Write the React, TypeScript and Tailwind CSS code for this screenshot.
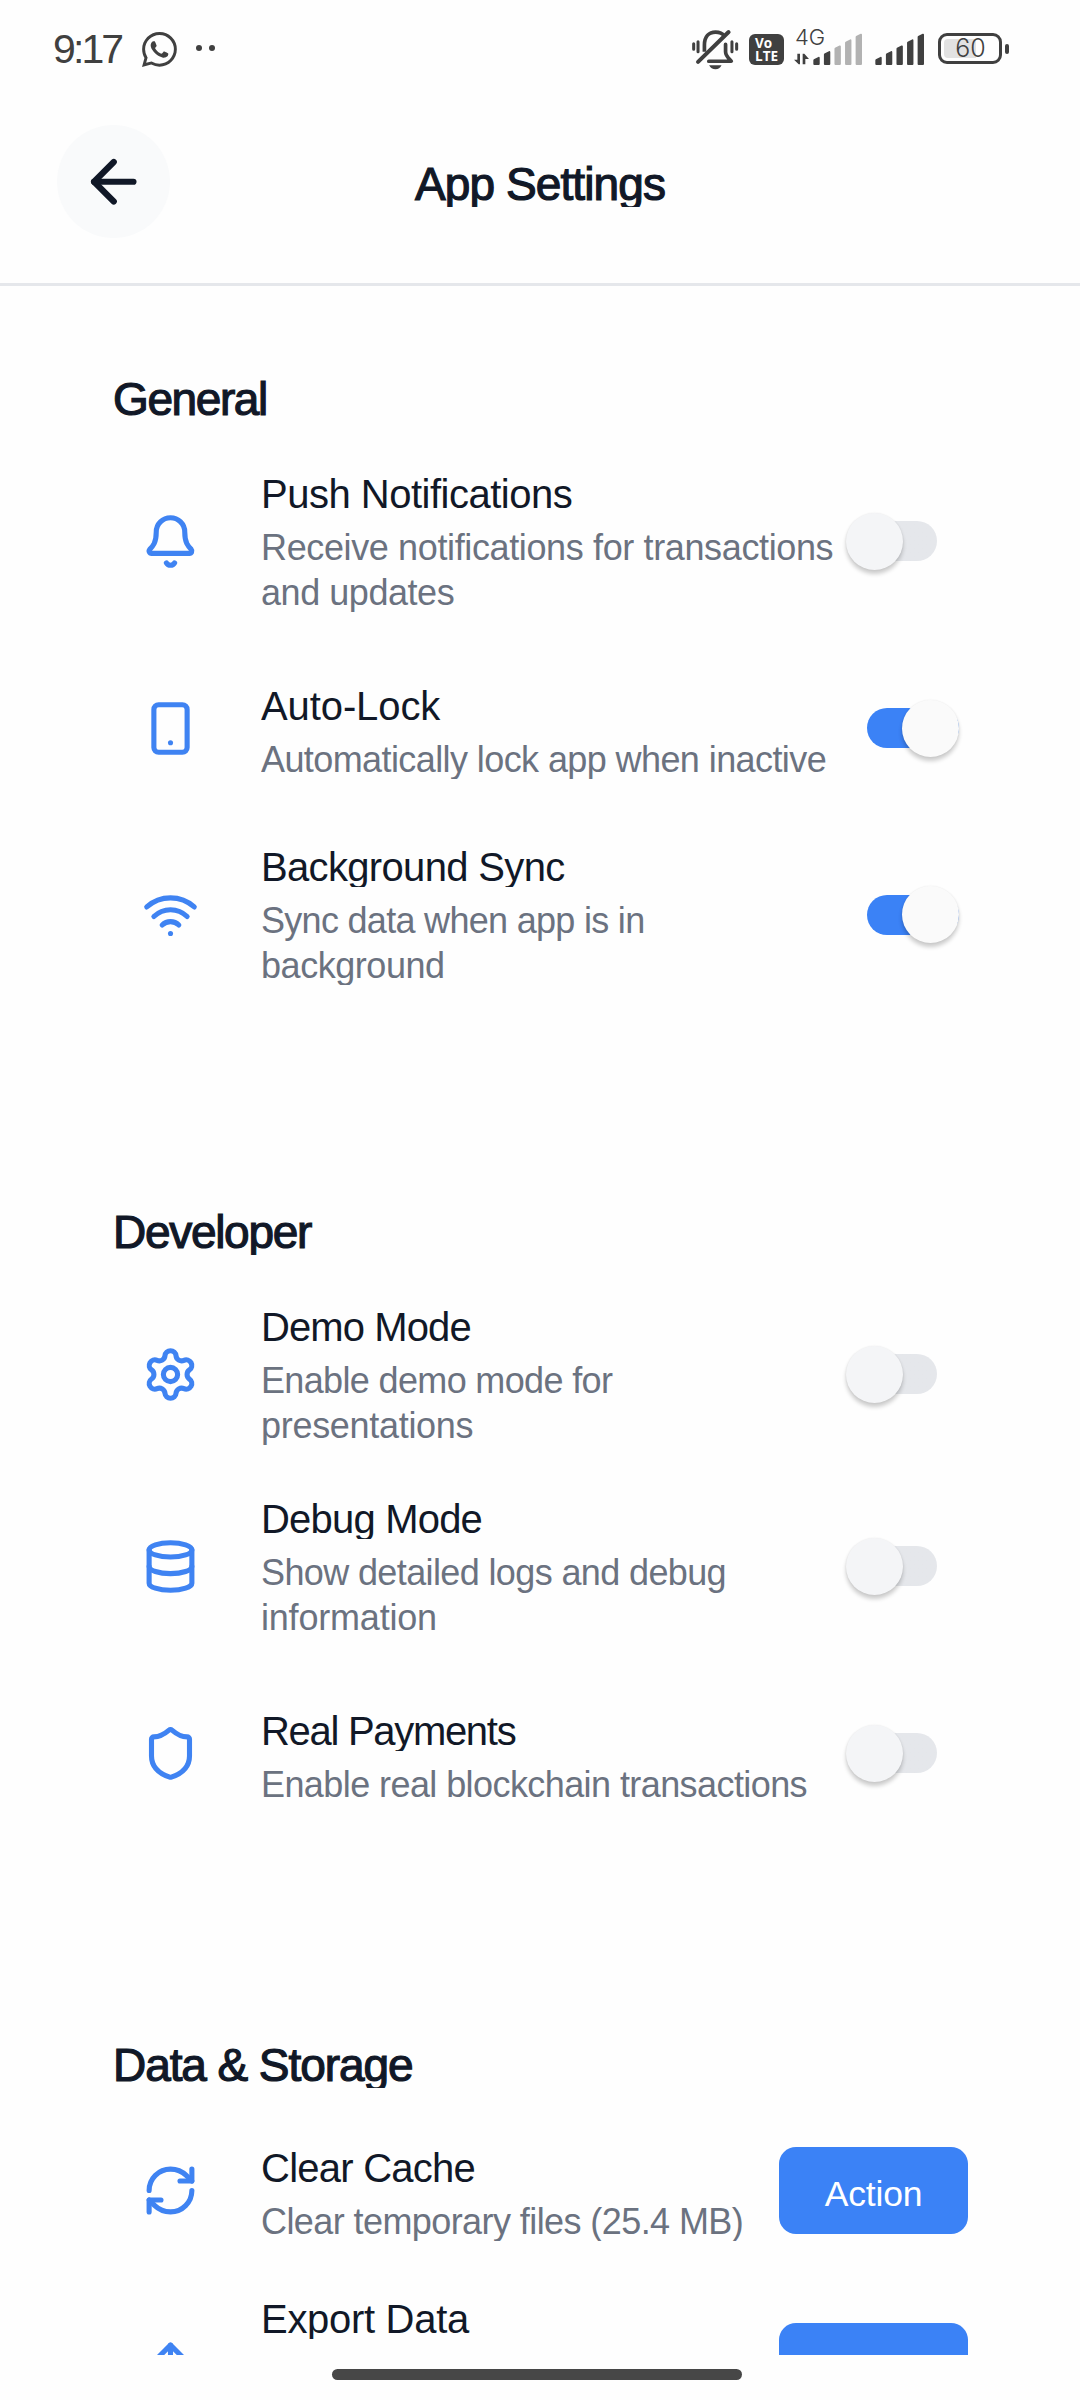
import { useState } from "react"
import { ArrowLeft, Bell, Database, RefreshCw, Settings, Shield, Smartphone, Upload, Wifi } from "lucide-react"
import type { LucideIcon } from "lucide-react"
import { BsWhatsapp } from "react-icons/bs"

interface TextLine {
  text: string
  tracking: string
}

interface SettingItem {
  icon: LucideIcon
  title: TextLine
  lines: TextLine[]
  height: string
  kind: "switch" | "action"
  enabled?: boolean
}

interface SettingSection {
  title: TextLine
  items: SettingItem[]
}

const sections: SettingSection[] = [
  {
    title: { text: "General", tracking: "tracking-[-1.4px]" },
    items: [
      {
        icon: Bell,
        title: { text: "Push Notifications", tracking: "tracking-[-0.5px]" },
        lines: [
          { text: "Receive notifications for transactions", tracking: "tracking-[-0.37px]" },
          { text: "and updates", tracking: "tracking-[-0.45px]" },
        ],
        height: "h-[192px]",
        kind: "switch",
      },
      {
        icon: Smartphone,
        title: { text: "Auto-Lock", tracking: "tracking-[-0.1px]" },
        lines: [{ text: "Automatically lock app when inactive", tracking: "tracking-[-0.59px]" }],
        height: "h-[182px]",
        kind: "switch",
        enabled: true,
      },
      {
        icon: Wifi,
        title: { text: "Background Sync", tracking: "tracking-[-0.66px]" },
        lines: [
          { text: "Sync data when app is in", tracking: "tracking-[-0.7px]" },
          { text: "background", tracking: "tracking-[-0.45px]" },
        ],
        height: "h-[191px]",
        kind: "switch",
        enabled: true,
      },
    ],
  },
  {
    title: { text: "Developer", tracking: "tracking-[-1.3px]" },
    items: [
      {
        icon: Settings,
        title: { text: "Demo Mode", tracking: "tracking-[-0.9px]" },
        lines: [
          { text: "Enable demo mode for", tracking: "tracking-[-0.65px]" },
          { text: "presentations", tracking: "tracking-[-0.3px]" },
        ],
        height: "h-[192px]",
        kind: "switch",
      },
      {
        icon: Database,
        title: { text: "Debug Mode", tracking: "tracking-[-0.8px]" },
        lines: [
          { text: "Show detailed logs and debug", tracking: "tracking-[-0.62px]" },
          { text: "information", tracking: "tracking-[-0.2px]" },
        ],
        height: "h-[192px]",
        kind: "switch",
      },
      {
        icon: Shield,
        title: { text: "Real Payments", tracking: "tracking-[-1.3px]" },
        lines: [{ text: "Enable real blockchain transactions", tracking: "tracking-[-0.58px]" }],
        height: "h-[182px]",
        kind: "switch",
      },
    ],
  },
  {
    title: { text: "Data & Storage", tracking: "tracking-[-1.08px]" },
    items: [
      {
        icon: RefreshCw,
        title: { text: "Clear Cache", tracking: "tracking-[-0.75px]" },
        lines: [{ text: "Clear temporary files (25.4 MB)", tracking: "tracking-[-0.58px]" }],
        height: "h-[159px]",
        kind: "action",
      },
      {
        icon: Upload,
        title: { text: "Export Data", tracking: "tracking-[-0.3px]" },
        lines: [],
        height: "h-[193px]",
        kind: "action",
      },
    ],
  },
]

function SignalBars({ active }: { active: number }) {
  const tops = [70, 53, 36, 18, 1]
  return (
    <svg viewBox="0 0 146 95" className="h-[32px] w-[49px]">
      {tops.map((top, i) => (
        <path
          key={top}
          d={`M${i * 31.5 + 1} ${top + 11}q0-3 3-4l12-6q4-1 4 3V92q0 3-3 3H${i * 31.5 + 4}q-3 0-3-3z`}
          fill={i < active ? "#404040" : "#b2b2b2"}
        />
      ))}
    </svg>
  )
}

function MutedBell() {
  return (
    <svg viewBox="96 88 140 122" className="h-[41px] w-[47px]" fill="none" stroke="#404040" strokeWidth="11" strokeLinecap="round">
      <path d="M101 132v16M114 126v30M215 126v30M229 132v16" strokeWidth="9" />
      <path d="M133 156v-20c0-26 14-39 33-39 12 0 21 4 27 12" strokeLinecap="butt" />
      <path d="M196 134v22c0 12 8 18 17 28h-67" strokeLinejoin="round" />
      <path d="M114 186 205 97" strokeWidth="12" />
      <path d="M147 196h37c-4 8-9 12-18 12s-15-4-19-12z" fill="#404040" stroke="none" />
    </svg>
  )
}

function StatusBar() {
  return (
    <div className="flex h-24 items-start pl-[53px] pt-[29px] text-[#404040]">
      <span className="w-[89px] text-[41px] leading-[41px] tracking-[-2.9px]">9:17</span>
      <BsWhatsapp className="mt-[3px] size-[35px]" />
      <div className="ml-[19px] mt-[16px] flex gap-[7px]">
        <span className="size-[6px] rounded-full bg-[#404040]" />
        <span className="size-[6px] rounded-full bg-[#404040]" />
      </div>
      <div className="ml-auto flex items-start pr-[71px]">
        <MutedBell />
        <div className="ml-[10px] mt-[5px] flex h-[31px] w-[35px] flex-col justify-center rounded-[6px] bg-[#404040] pl-[6px] font-['Open_Sans'] text-[13.5px] leading-[13px] font-bold text-white">
          <span>Vo</span>
          <span>LTE</span>
        </div>
        <div className="ml-[10px] flex h-10 w-[19px] flex-col">
          <span className="pl-[1px] font-['Inter'] text-[22px] leading-[16px] font-light">4G</span>
          <svg viewBox="402 158 45 36" className="mt-[8px] h-[12px] w-[15px]" fill="#404040">
            <path d="M412 160h8v32h-4l-14-14h10zM428 192h8v-16h11l-14-16h-5z" />
          </svg>
        </div>
        <div className="mt-[4px]">
          <SignalBars active={2} />
        </div>
        <div className="ml-[13px] mt-[4px]">
          <SignalBars active={5} />
        </div>
        <div className="ml-[14px] mt-[4px] flex items-center">
          <div className="relative flex h-[31px] w-[64px] items-center justify-center rounded-[9px] border-[3px] border-[#404040]">
            <span className="absolute top-[3px] left-[3px] h-[19px] w-[32px] rounded-l-[4px] bg-[#e2e2e2]" />
            <span className="relative pl-px font-['Inter'] text-[25px] leading-[25px] font-light">60</span>
          </div>
          <span className="ml-[3px] h-[10px] w-[4px] rounded-[2px] bg-[#404040]" />
        </div>
      </div>
    </div>
  )
}

function Toggle({ on, onChange }: { on: boolean; onChange: () => void }) {
  return (
    <button
      role="switch"
      aria-checked={on}
      onClick={onChange}
      className={
        on
          ? "mr-[121px] flex h-10 w-[92px] shrink-0 items-center justify-end rounded-full bg-[#3b82f6]"
          : "mr-[143px] flex h-10 w-[91px] shrink-0 items-center rounded-full bg-gradient-to-r from-transparent from-30% to-[#e5e7eb] to-30%"
      }
    >
      <span
        className={
          on
            ? "size-[57px] shrink-0 rounded-full bg-[#fafafa] shadow-[0_4px_4px_rgba(0,0,0,0.2),0_0_2px_rgba(0,0,0,0.08)]"
            : "size-[57px] shrink-0 rounded-full bg-[#f4f5f7] shadow-[0_4px_4px_rgba(0,0,0,0.2),0_0_2px_rgba(0,0,0,0.08)]"
        }
      />
    </button>
  )
}

function SettingRow({ item }: { item: SettingItem }) {
  const [on, setOn] = useState(Boolean(item.enabled))
  const Icon = item.icon
  const single = item.lines.length === 1

  return (
    <div className={`flex items-center pl-[142px] ${item.height}`}>
      <Icon size={57} strokeWidth={2.15} className="shrink-0 text-[#3f83f2]" />
      <div className={`ml-[62px] flex-1 whitespace-nowrap ${single ? "pt-[6px]" : "pt-px"}`}>
        <p className={`h-[42px] overflow-hidden text-[40px] leading-[44px] text-[#111827] ${item.title.tracking}`}>
          {item.title.text}
        </p>
        <div className={`mt-[11px] overflow-hidden text-[36px] leading-[45px] text-[#6b7280] ${single ? "h-[42px]" : "h-[87px]"}`}>
          {item.lines.map((line) => (
            <p key={line.text} className={line.tracking}>
              {line.text}
            </p>
          ))}
        </div>
      </div>
      {item.kind === "switch" ? (
        <Toggle on={on} onChange={() => setOn(!on)} />
      ) : (
        <button className="mr-[112px] flex h-[87px] w-[189px] shrink-0 items-center justify-center rounded-[17px] bg-[#3b82f6] pt-[7px] text-[35.5px] leading-[45px] tracking-[-0.2px] text-white">
          Action
        </button>
      )}
    </div>
  )
}

export default function App() {
  return (
    <div className="flex h-[2400px] w-[1080px] flex-col overflow-hidden bg-[#fefefe] font-['Liberation_Sans',Arial,sans-serif]">
      <StatusBar />
      <header className="flex h-[190px] shrink-0 items-start border-b-[3px] border-[#e5e7eb] px-[57px] pt-[29px]">
        <button className="flex size-[113px] items-center justify-center rounded-full bg-[#f9fafb] text-[#111827]">
          <ArrowLeft size={67.5} strokeWidth={2.2} />
        </button>
        <h1 className="mt-[34px] h-[48px] flex-1 overflow-hidden text-center text-[46px] leading-[50px] tracking-[-0.9px] text-[#111827] [-webkit-text-stroke:1.2px_#111827]">
          App Settings
        </h1>
        <div className="w-[113px]" />
      </header>
      <main className="h-[2069px] shrink-0 overflow-hidden pt-[88px]">
        {sections.map((section) => (
          <section key={section.title.text} className="h-[833px]">
            <h2
              className={`mb-[23px] ml-[113px] h-[48px] overflow-hidden text-[46px] leading-[50px] text-[#111827] [-webkit-text-stroke:1.2px_#111827] ${section.title.tracking}`}
            >
              {section.title.text}
            </h2>
            {section.items.map((item) => (
              <SettingRow key={item.title.text} item={item} />
            ))}
          </section>
        ))}
      </main>
      <div className="mt-[14px] ml-[332px] h-[11px] w-[410px] shrink-0 rounded-full bg-[#474747]" />
    </div>
  )
}
